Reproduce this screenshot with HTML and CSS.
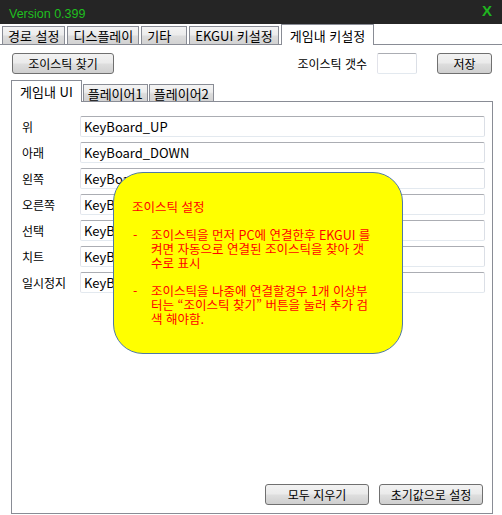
FILE: index.html
```html
<!doctype html>
<html lang="ko">
	<head>
		<meta charset="utf-8" />
		<title>EKGUI 설정</title>
		<link rel="stylesheet" href="styles.css">
	</head>
	<body>
		<div class="window">
			<header class="titlebar">
				<span class="version">Version 0.399</span>
				<span class="close">X</span>
			</header>
			<nav class="tabs">
				<span class="tab">경로 설정</span>
				<span class="tab">디스플레이</span>
				<span class="tab">기타</span>
				<span class="tab">EKGUI 키설정</span>
				<span class="tab tab-active">게임내 키설정</span>
			</nav>
			<section class="page">
				<div class="toolbar">
					<button class="btn btn-find">조이스틱 찾기</button>
					<span class="count-label">조이스틱 갯수</span>
					<input class="field count-field" type="text" />
					<button class="btn btn-save">저장</button>
				</div>
				<div class="subtabs">
					<span class="subtab subtab-active">게임내 UI</span>
					<span class="subtab">플레이어1</span>
					<span class="subtab">플레이어2</span>
				</div>
				<div class="panel">
					<div class="rows">
						<label class="row-label">위</label>
						<input class="field" type="text" value="KeyBoard_UP" />
						<label class="row-label">아래</label>
						<input class="field" type="text" value="KeyBoard_DOWN" />
						<label class="row-label">왼쪽</label>
						<input class="field" type="text" value="KeyBoard_LEFT" />
						<label class="row-label">오른쪽</label>
						<input class="field" type="text" value="KeyBoard_RIGHT" />
						<label class="row-label">선택</label>
						<input class="field" type="text" value="KeyBoard_ENTER" />
						<label class="row-label">치트</label>
						<input class="field" type="text" value="KeyBoard_F12" />
						<label class="row-label">일시정지</label>
						<input class="field" type="text" value="KeyBoard_ESC" />
					</div>
					<div class="actions">
						<button class="btn btn-wide">모두 지우기</button>
						<button class="btn btn-wide">초기값으로 설정</button>
					</div>
					<div class="balloon">
						<p class="balloon-title">조이스틱 설정</p>
						<div class="balloon-item">
							<span class="dash">-</span>
							<p>조이스틱을 먼저 PC에 연결한후 EKGUI 를<br>켜면 자동으로 연결된 조이스틱을 찾아 갯<br>수로 표시</p>
						</div>
						<div class="balloon-item">
							<span class="dash">-</span>
							<p>조이스틱을 나중에 연결할경우 1개 이상부<br>터는 “조이스틱 찾기” 버튼을 눌러 추가 검<br>색 해야함.</p>
						</div>
					</div>
				</div>
			</section>
		</div>
	</body>
</html>
```

FILE: styles.css
```css
/* Window */
body {
	margin: 0;
	background-color: #fff;
	color: #000;
	font-family: "Noto Sans CJK KR", "Liberation Sans", sans-serif;
	font-size: 12px;
}

.window {
	display: flex;
	flex-direction: column;
	height: 515px;
	overflow: hidden;
}

.titlebar {
	display: flex;
	justify-content: space-between;
	align-items: flex-start;
	height: 24px;
	padding: 0 10px 0 9px;
	background-color: #252525;
	box-sizing: border-box;
}

.version {
	margin-top: 7px;
	color: #1fbf1f;
	font-family: "Liberation Sans", sans-serif;
	font-size: 12.5px;
	line-height: 14px;
}

.close {
	margin-top: 3px;
	color: #1fb51f;
	font-family: "Liberation Sans", sans-serif;
	font-size: 15px;
	font-weight: bold;
	line-height: 15px;
}

/* Top tabs */
.tabs {
	display: flex;
	align-items: flex-end;
	gap: 2px;
	height: 21px;
	padding-left: 2px;
	border-bottom: 1px solid #898c95;
	box-sizing: border-box;
}

.tab {
	display: flex;
	align-items: center;
	min-width: 46px;
	height: 18px;
	padding: 0 5px;
	border: 1px solid #898c95;
	border-bottom: none;
	background: linear-gradient(#f4f4f4, #ececec 45%, #dcdcdc 55%, #d2d2d2);
	box-sizing: border-box;
	font-size: 13px;
	white-space: nowrap;
}

.tab-active {
	height: 21px;
	margin-bottom: -1px;
	padding: 0 8px;
	background: #fff;
}

/* Page */
.page {
	display: flex;
	flex: 1;
	flex-direction: column;
	padding: 0 9px 1px 11px;
}

.toolbar {
	display: flex;
	align-items: center;
	height: 21px;
	margin-top: 8px;
	padding: 0 1px;
}

.btn {
	height: 21px;
	padding: 0;
	border: 1px solid #707070;
	border-radius: 3px;
	background: linear-gradient(#f2f2f2, #ebebeb 45%, #dddddd 55%, #cfcfcf);
	color: #000;
	font-family: inherit;
	font-size: 12px;
}

.btn-find {
	width: 102px;
}

.btn-save {
	width: 55px;
}

.count-label {
	margin-left: auto;
	margin-right: 10px;
}

.field {
	height: 21px;
	padding: 0 3px;
	border: 1px solid;
	border-color: #abadb3 #dbdfe6 #e3e9ef #e2e3ea;
	border-radius: 2px;
	box-sizing: border-box;
	font-family: inherit;
	font-size: 13px;
	outline: none;
}

.count-field {
	width: 40px;
	margin-right: 20px;
}

/* Sub tabs */
.subtabs {
	display: flex;
	align-items: flex-end;
	gap: 1px;
	margin-top: 6px;
}

.subtab {
	display: flex;
	align-items: center;
	height: 17px;
	padding: 0 4px;
	border: 1px solid #898c95;
	border-bottom: none;
	background: linear-gradient(#f4f4f4, #ececec 45%, #dcdcdc 55%, #d2d2d2);
	box-sizing: border-box;
	font-size: 13px;
}

.subtab-active {
	position: relative;
	z-index: 1;
	height: 22px;
	margin-bottom: -1px;
	padding: 0 8px;
	background: #fff;
}

.panel {
	display: flex;
	flex: 1;
	flex-direction: column;
	position: relative;
	padding: 14px 7px 8px 10px;
	border: 1px solid #898c95;
}

.rows {
	display: grid;
	grid-template-columns: 58px 1fr;
	grid-auto-rows: 21px;
	row-gap: 5px;
	align-items: center;
}

.actions {
	display: flex;
	justify-content: flex-end;
	gap: 10px;
	margin-top: auto;
	padding-right: 2px;
}

.btn-wide {
	width: 104px;
}

/* Tooltip balloon */
.balloon {
	position: absolute;
	left: 101px;
	top: 70px;
	width: 290px;
	height: 182px;
	padding: 27px 8px 0 18px;
	border: 1px solid #4f7aa5;
	border-radius: 30px;
	background-color: #ffff00;
	box-sizing: border-box;
	color: #ff0000;
	font-size: 12.5px;
	line-height: 14px;
}

.balloon p {
	margin: 0;
	white-space: nowrap;
}

.balloon-title {
	margin-bottom: 14px !important;
}

.balloon-item {
	display: flex;
	margin-bottom: 14px;
}

.dash {
	width: 18px;
	padding-left: 1px;
}
```
